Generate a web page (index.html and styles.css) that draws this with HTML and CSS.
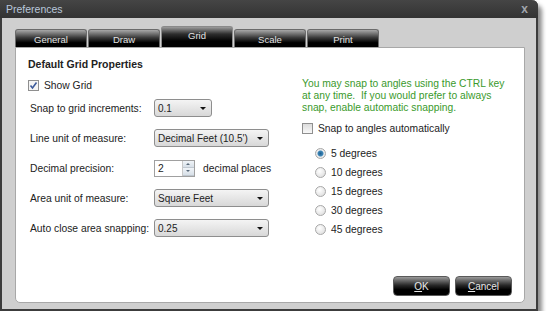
FILE: index.html
```html
<!DOCTYPE html>
<html lang="en">
<head>
    <meta charset="UTF-8">
    <title>Preferences</title>
    <link rel="stylesheet" href="styles.css">
</head>
<body>
    <div class="window">
        <div class="title-bar">
            <span class="title">Preferences</span>
            <span class="close">x</span>
        </div>
        <div class="window-body">
            <div class="tabs">
                <div class="tab">General</div>
                <div class="tab">Draw</div>
                <div class="tab active">Grid</div>
                <div class="tab">Scale</div>
                <div class="tab">Print</div>
            </div>
            <div class="panel">
                <div class="columns">
                    <div class="left-col">
                        <h3>Default Grid Properties</h3>
                        <label class="check-row">
                            <span class="checkbox checked">
                                <svg width="9" height="9" viewBox="0 0 9 9"><path d="M1.5 4.5 L3.5 7 L7.5 1.5" fill="none" stroke="#3c5a9a" stroke-width="1.6"/></svg>
                            </span>
                            Show Grid
                        </label>
                        <div class="form-grid">
                            <span class="label">Snap to grid increments:</span>
                            <div class="select small"><span>0.1</span><span class="arrow"></span></div>

                            <span class="label">Line unit of measure:</span>
                            <div class="select"><span>Decimal Feet (10.5')</span><span class="arrow"></span></div>

                            <span class="label">Decimal precision:</span>
                            <div class="spin-row">
                                <div class="spin">
                                    <span>2</span>
                                    <span class="spin-btns">
                                        <span class="spin-btn up"></span>
                                        <span class="spin-btn down"></span>
                                    </span>
                                </div>
                                <span>decimal places</span>
                            </div>

                            <span class="label">Area unit of measure:</span>
                            <div class="select"><span>Square Feet</span><span class="arrow"></span></div>

                            <span class="label">Auto close area snapping:</span>
                            <div class="select"><span>0.25</span><span class="arrow"></span></div>
                        </div>
                    </div>
                    <div class="right-col">
                        <p class="hint">You may snap to angles using the CTRL key at any time.&nbsp; If you would prefer to always snap, enable automatic snapping.</p>
                        <label class="check-row">
                            <span class="checkbox"></span>
                            Snap to angles automatically
                        </label>
                        <div class="radios">
                            <label class="radio-row"><span class="radio on"></span>5 degrees</label>
                            <label class="radio-row"><span class="radio"></span>10 degrees</label>
                            <label class="radio-row"><span class="radio"></span>15 degrees</label>
                            <label class="radio-row"><span class="radio"></span>30 degrees</label>
                            <label class="radio-row"><span class="radio"></span>45 degrees</label>
                        </div>
                    </div>
                </div>
                <div class="actions">
                    <button class="btn"><u>O</u>K</button>
                    <button class="btn"><u>C</u>ancel</button>
                </div>
            </div>
        </div>
    </div>
</body>
</html>
```

FILE: styles.css
```css
body {
    margin: 0;
    background-color: #ffffff;
    font-family: "Liberation Sans", Arial, sans-serif;
    font-size: 10.3px;
    color: #222;
}

.window {
    width: 538px;
    height: 311px;
    box-sizing: border-box;
    background-color: #cfcfcf;
    border: 2px solid #3c3c3c;
    border-top: none;
    border-radius: 0 6px 0 0;
    box-shadow: 4px 5px 4px rgba(0, 0, 0, 0.45);
    display: flex;
    flex-direction: column;
}

.title-bar {
    height: 18px;
    margin: 0 -2px;
    background: linear-gradient(#454545, #333333);
    border-radius: 0 6px 0 0;
    display: flex;
    align-items: center;
    justify-content: space-between;
    padding: 0 10px 0 6px;
}

.title {
    color: #b9c8db;
    font-size: 10.5px;
}

.close {
    color: #a0a6ad;
    font-weight: bold;
    font-size: 12px;
}

.window-body {
    flex: 1;
    display: flex;
    flex-direction: column;
    padding: 8px 11px 6px 13px;
}

.tabs {
    display: flex;
    align-items: flex-end;
    height: 21px;
}

.tab {
    box-sizing: border-box;
    width: 72px;
    height: 18px;
    margin-right: 1px;
    border: 1px solid #6b6b6b;
    border-bottom: none;
    border-radius: 3px 3px 0 0;
    background: linear-gradient(#a8a8a8, #3a3a3a 45%, #000000 75%, #000000);
    color: #e4e4e4;
    font-size: 9.5px;
    text-align: center;
    line-height: 19px;
}

.tab.active {
    height: 21px;
    border-color: #8a8a8a;
    background: linear-gradient(#9c9c9c, #2e2e2e 35%, #000000 70%, #000000);
    line-height: 17px;
}

.panel {
    flex: 1;
    background-color: #ffffff;
    border: 1px solid #a8a8a8;
    border-radius: 0 0 5px 5px;
    display: flex;
    flex-direction: column;
    padding: 8px 12px 6px 12px;
}

.columns {
    display: flex;
    flex: 1;
}

.left-col {
    width: 274px;
    flex-shrink: 0;
}

.left-col h3 {
    margin: 2px 0 10px 0;
    font-size: 10.5px;
    font-weight: bold;
    color: #222;
}

.check-row {
    display: flex;
    align-items: center;
    gap: 5px;
}

.checkbox {
    width: 9px;
    height: 9px;
    border: 1px solid #8f8f8f;
    background: linear-gradient(#dcdcdc, #f8f8f8);
    display: flex;
    align-items: center;
    justify-content: center;
}

.checkbox.checked {
    background: #f4f4f4;
}

.form-grid {
    display: grid;
    grid-template-columns: 124px auto;
    grid-auto-rows: 30px;
    align-items: center;
    margin-top: 2px;
    padding-left: 2px;
}

.label {
    white-space: nowrap;
}

.select {
    box-sizing: border-box;
    height: 18px;
    width: 115px;
    border: 1px solid #8e8e8e;
    border-radius: 3px;
    background: linear-gradient(#f4f4f4, #e6e6e6 50%, #d8d8d8);
    display: flex;
    align-items: center;
    justify-content: space-between;
    padding: 0 5px 0 3px;
    font-size: 10px;
}

.select.small {
    width: 58px;
}

.arrow {
    width: 0;
    height: 0;
    border-left: 3px solid transparent;
    border-right: 3px solid transparent;
    border-top: 3px solid #111;
}

.spin-row {
    display: flex;
    align-items: center;
    gap: 8px;
}

.spin {
    width: 41px;
    height: 17px;
    box-sizing: border-box;
    border: 1px solid #a0a0a0;
    display: flex;
    justify-content: space-between;
    align-items: stretch;
    padding-left: 3px;
    line-height: 15px;
}

.spin-btns {
    width: 11px;
    display: flex;
    flex-direction: column;
    border-left: 1px solid #c8c8c8;
}

.spin-btn {
    flex: 1;
    background: linear-gradient(#f0f4f8, #d8e0e8);
    border-bottom: 1px solid #c0c8d0;
    position: relative;
}

.spin-btn.up::after,
.spin-btn.down::after {
    content: "";
    position: absolute;
    left: 3px;
    top: 2px;
    border-left: 2px solid transparent;
    border-right: 2px solid transparent;
}

.spin-btn.up::after {
    border-bottom: 2px solid #5a6a7a;
}

.spin-btn.down::after {
    border-top: 2px solid #5a6a7a;
}

.right-col {
    flex: 1;
}

.hint {
    margin: 22px 0 9px 0;
    color: #3a9a2c;
    line-height: 12px;
    width: 206px;
}

.radios {
    display: flex;
    flex-direction: column;
    gap: 5px;
    margin-top: 12px;
    padding-left: 13px;
}

.radio-row {
    display: flex;
    align-items: center;
    gap: 5px;
    height: 14px;
}

.radio {
    width: 9px;
    height: 9px;
    border-radius: 50%;
    border: 1px solid #a8a8a8;
    background: radial-gradient(circle at 40% 35%, #ffffff, #d8d8d8);
}

.radio.on {
    background: radial-gradient(circle, #1d5f8f 0, #3f87b8 2.5px, #f0f0f0 3.5px, #d8d8d8);
}

.actions {
    display: flex;
    justify-content: flex-end;
    gap: 5px;
}

.btn {
    width: 57px;
    height: 20px;
    border: 1px solid #5a5a5a;
    border-radius: 4px;
    background: linear-gradient(#9a9a9a, #2a2a2a 45%, #000000 70%, #000000);
    color: #e8e8e8;
    font-family: "Liberation Sans", Arial, sans-serif;
    font-size: 10px;
    padding: 0;
}
```
